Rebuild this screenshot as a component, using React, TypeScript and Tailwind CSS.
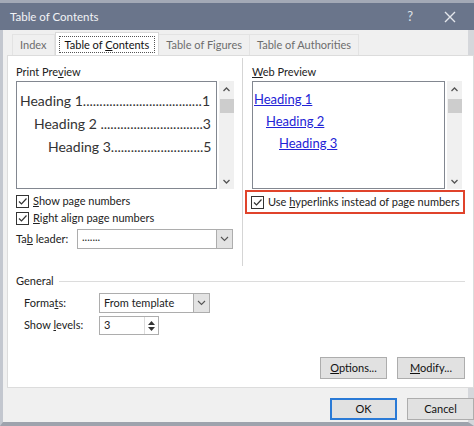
import React from "react";

const font = { fontFamily: 'Lato, "Noto Sans", sans-serif' };

function Check({ label, u, rest }: { label?: string; u: string; rest: string }) {
  return (
    <div className="flex items-center gap-[4px] h-[17px] whitespace-nowrap">
      <span className="w-[13px] h-[13px] shrink-0 border border-[#333] bg-white flex items-center justify-center">
        <svg width="11" height="11" viewBox="0 0 11 11">
          <path d="M2 5.5 L4.5 8 L9.5 2.5" fill="none" stroke="#333" strokeWidth="1.2" />
        </svg>
      </span>
      <span>
        {label}
        <span className="underline">{u}</span>
        {rest}
      </span>
    </div>
  );
}

function Scroll() {
  return (
    <div className="w-[15px] flex flex-col items-center bg-[#f0f0f0] h-full">
      <svg width="9" height="14" viewBox="0 0 9 14" className="mt-[2px]">
        <path d="M1.5 8 L4.5 5 L7.5 8" fill="none" stroke="#555" strokeWidth="1.3" />
      </svg>
      <div className="w-[14px] h-[14px] bg-[#cdcdcd] mt-[2px]" />
      <div className="flex-1" />
      <svg width="9" height="12" viewBox="0 0 9 12" className="mb-[1px]">
        <path d="M1.5 4 L4.5 7 L7.5 4" fill="none" stroke="#555" strokeWidth="1.3" />
      </svg>
    </div>
  );
}

function Chevron() {
  return (
    <div className="w-[16px] h-full bg-[#e3e3e3] border-l border-[#adadad] flex items-center justify-center">
      <svg width="9" height="6" viewBox="0 0 9 6">
        <path d="M1 1 L4.5 4.5 L8 1" fill="none" stroke="#555" strokeWidth="1.1" />
      </svg>
    </div>
  );
}

function Btn({ u, rest, w, primary }: { u: string; rest: string; w: string; primary?: boolean }) {
  return (
    <div
      className={`${w} h-[22px] flex items-center justify-center bg-[#e1e1e1] text-[#111] ${
        primary ? "border-[2px] border-[#2a7ad6]" : "border border-[#adadad]"
      }`}
    >
      <span>
        <span className="underline">{u}</span>
        {rest}
      </span>
    </div>
  );
}

function Leader({ text, num, dots, pad }: { text: string; num: string; dots: number; pad: string }) {
  return (
    <div className={`flex justify-between whitespace-nowrap ${pad}`}>
      <span>
        {text}
        {".".repeat(dots)}
      </span>
      <span>{num}</span>
    </div>
  );
}

export default function App() {
  return (
    <div
      className="w-[474px] h-[426px] bg-[#f0f0f0] overflow-hidden flex flex-col text-[11px] text-[#222]"
      style={font}
    >
      <div className="h-[3px] bg-[#a3a9b6]" />
      <div className="h-[27px] bg-[#6a758b] flex items-center pl-[10px] text-[11.5px]">
        <span className="text-[#f2f3f6]">Table of Contents</span>
        <span className="ml-auto mr-[31px] text-[13px] text-[#dfe2e8]">?</span>
        <svg width="12" height="12" viewBox="0 0 12 12" className="mr-[18px]">
          <path d="M1 1 L11 11 M11 1 L1 11" stroke="#e4e7ec" strokeWidth="1.4" />
        </svg>
      </div>
      <div className="flex-1 flex border-l-[3px] border-[#c3c7cf] border-r-[6px] border-r-[#d5d7db] border-b-[4px] border-b-[#9ea3ad]">
        <div className="flex-1 flex flex-col pl-[4px] pr-[3px]">
          {/* tabs */}
          <div className="h-[25px] flex items-end pl-[5px] text-[#6d6d6d]">
            <div className="h-[21px] px-[7px] flex items-center border-t border-l border-r border-[#e3e3e3] bg-[#f0f0f0]">
              Index
            </div>
            <div className="h-[23px] px-[3px] flex items-center border-t border-l border-r border-[#d9d9d9] bg-white text-[#111]">
              <span className="border border-dotted border-[#555] px-[5px] leading-[15px]">
                Table of <span className="underline">C</span>ontents
              </span>
            </div>
            <div className="h-[21px] px-[7px] flex items-center border-t border-r border-[#e3e3e3]">
              Table of Figures
            </div>
            <div className="h-[21px] px-[7px] flex items-center border-t border-r border-[#e3e3e3]">
              Table of Authorities
            </div>
          </div>
          {/* panel */}
          <div className="h-[333px] bg-white border border-[#dcdcdc] flex flex-col px-[8px]">
            <div className="flex h-[213px]">
              <div className="w-[225px] flex flex-col pt-[8px]">
                <div className="h-[16px]">
                  Print Pre<span className="underline">v</span>iew
                </div>
                <div className="flex h-[108px] mt-[1px]">
                  <div className="w-[201px] border border-[#828790] pt-[7px] pl-[3px] pr-[6px] text-[14px] text-[#333] leading-[23px]">
                    <Leader text="Heading 1" num="1" dots={36} pad="" />
                    <Leader text="Heading 2 " num="3" dots={31} pad="pl-[14px]" />
                    <Leader text="Heading 3" num="5" dots={28} pad="pl-[28px]" />
                  </div>
                  <div className="ml-[2px]">
                    <Scroll />
                  </div>
                </div>
                <div className="mt-[4px] flex flex-col">
                  <Check u="S" rest="how page numbers" />
                  <Check u="R" rest="ight align page numbers" />
                </div>
                <div className="flex items-center mt-[2px]">
                  <span className="w-[61px]">
                    Ta<span className="underline">b</span> leader:
                  </span>
                  <div className="w-[156px] h-[20px] border border-[#adadad] flex items-center">
                    <span className="flex-1 pl-[4px] -mt-[4px]">.......</span>
                    <Chevron />
                  </div>
                </div>
              </div>
              <div className="w-[1px] bg-[#d5d5d5] ml-[1px] mt-[2px] h-[208px]" />
              <div className="flex-1 flex flex-col pt-[8px] pl-[2px]">
                <div className="h-[16px] pl-[7px]">
                  <span className="underline">W</span>eb Preview
                </div>
                <div className="flex h-[108px] mt-[1px] pl-[7px]">
                  <div className="w-[193px] border border-[#828790] pt-[6px] pl-[1px] text-[13px] text-[#2323d6] leading-[22px]">
                    <div className="underline">Heading 1</div>
                    <div className="underline pl-[12px]">Heading 2</div>
                    <div className="underline pl-[25px]">Heading 3</div>
                  </div>
                  <div className="ml-[2px]">
                    <Scroll />
                  </div>
                </div>
                <div className="mt-[1px] w-[220px] h-[24px] border-[2px] border-[#e0432b] flex items-center pl-[4px]">
                  <Check label="Use " u="h" rest="yperlinks instead of page numbers" />
                </div>
              </div>
            </div>
            <div className="flex items-center mt-[4px] h-[16px]">
              <span>General</span>
              <div className="flex-1 h-[1px] bg-[#dcdcdc] ml-[5px]" />
            </div>
            <div className="flex items-center mt-[4px] pl-[8px]">
              <span className="w-[75px]">
                Forma<span className="underline">t</span>s:
              </span>
              <div className="w-[111px] h-[20px] border border-[#adadad] flex items-center">
                <span className="flex-1 pl-[4px]">From template</span>
                <Chevron />
              </div>
            </div>
            <div className="flex items-center mt-[3px] pl-[8px]">
              <span className="w-[75px]">
                Show <span className="underline">l</span>evels:
              </span>
              <div className="w-[60px] h-[19px] border border-[#adadad] flex items-center">
                <span className="flex-1 pl-[4px]">3</span>
                <div className="w-[14px] h-full border-l border-[#dcdcdc] flex flex-col items-center justify-center gap-[2px]">
                  <svg width="7" height="4" viewBox="0 0 7 4">
                    <path d="M0 4 L3.5 0 L7 4 Z" fill="#333" />
                  </svg>
                  <svg width="7" height="4" viewBox="0 0 7 4">
                    <path d="M0 0 L3.5 4 L7 0 Z" fill="#333" />
                  </svg>
                </div>
              </div>
            </div>
            <div className="flex justify-end gap-[10px] mt-[22px]">
              <Btn u="O" rest="ptions..." w="w-[67px]" />
              <Btn u="M" rest="odify..." w="w-[68px]" />
            </div>
          </div>
          <div className="flex justify-end gap-[10px] mt-[10px]">
            <Btn u="" rest="OK" w="w-[67px]" primary />
            <Btn u="" rest="Cancel" w="w-[67px]" />
          </div>
        </div>
      </div>
    </div>
  );
}
